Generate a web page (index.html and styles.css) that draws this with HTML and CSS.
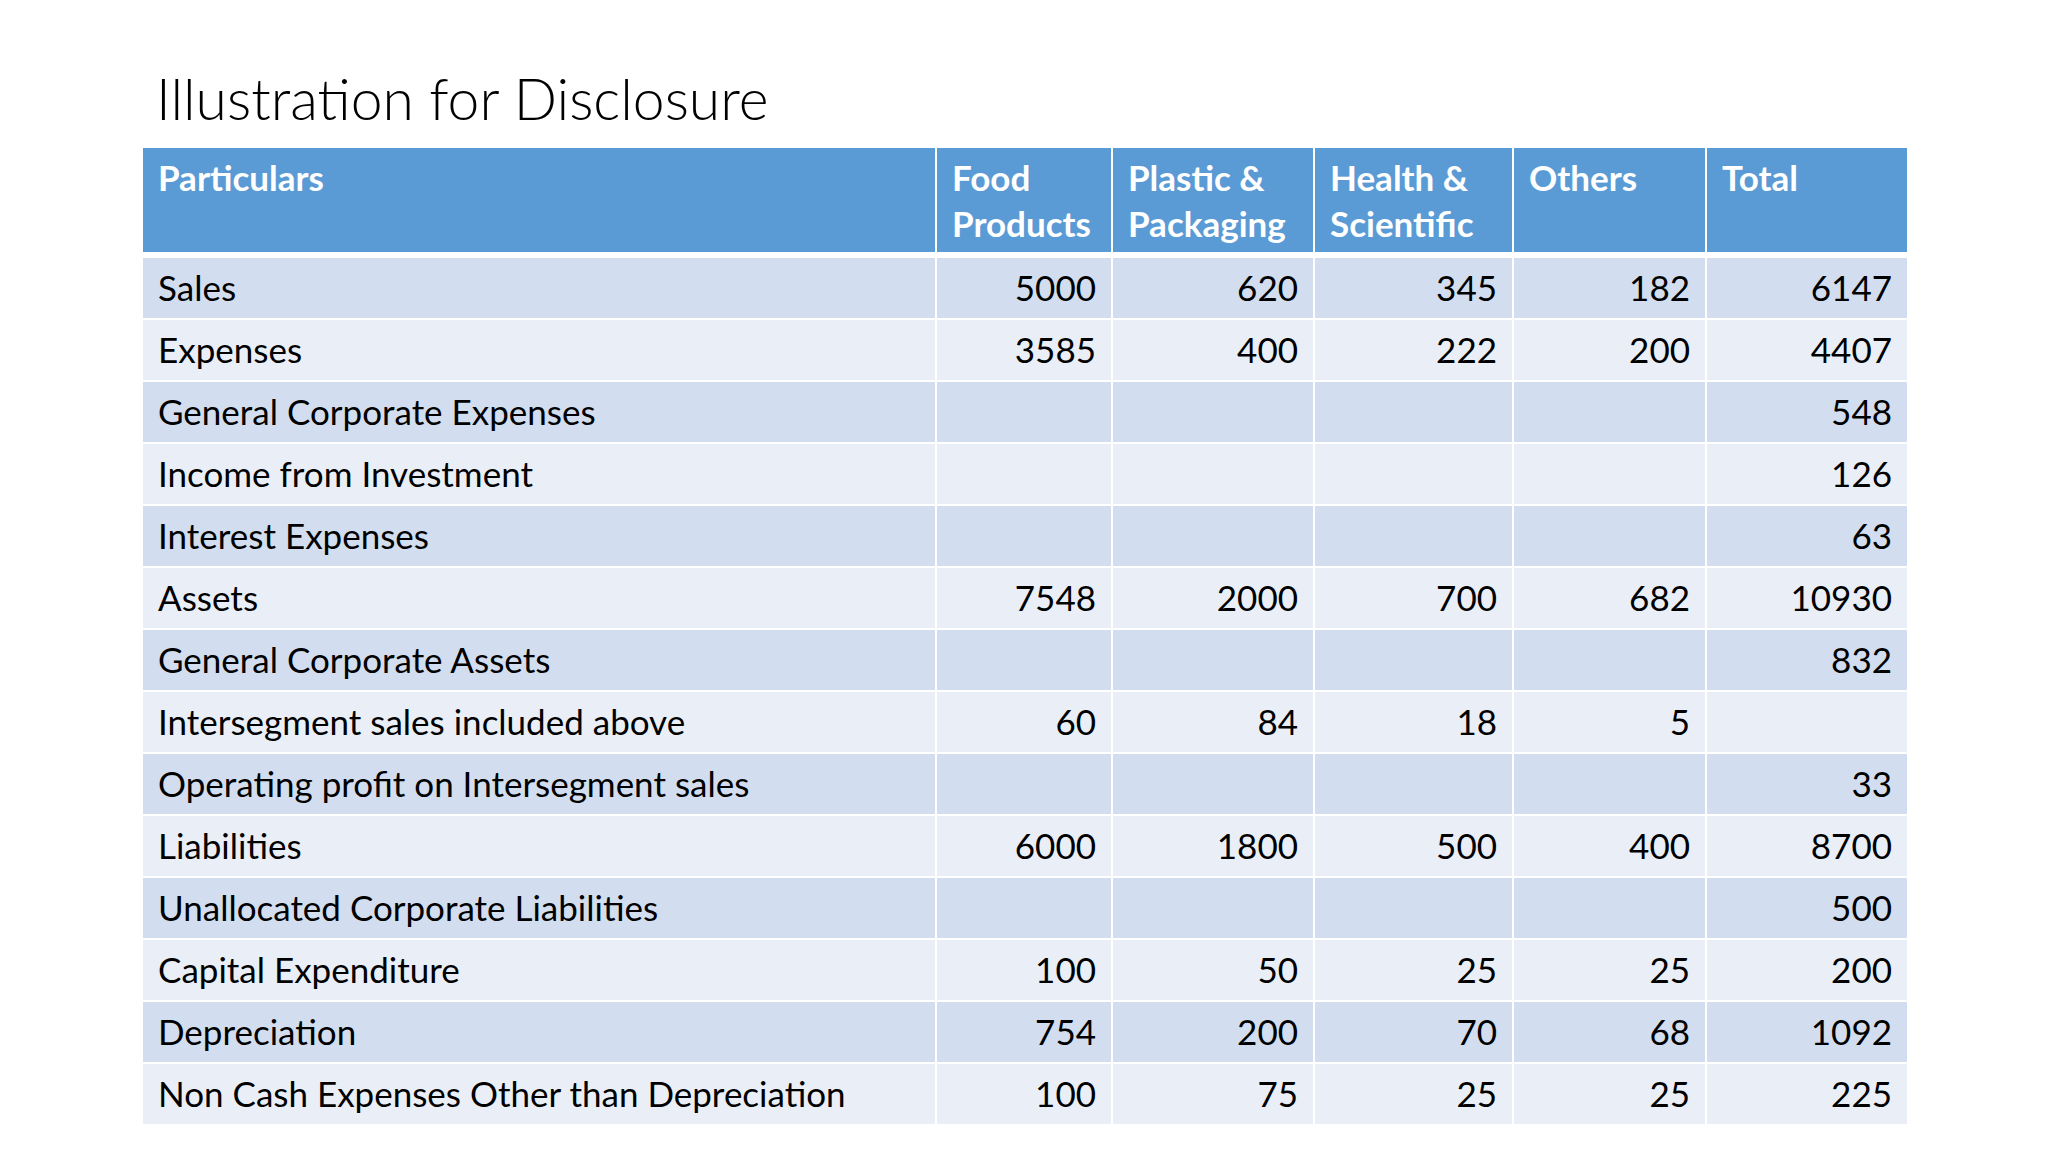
FILE: index.html
```html
<!DOCTYPE html>
<html lang="en">
<head>
<meta charset="utf-8">
<title>Illustration for Disclosure</title>
<link rel="stylesheet" href="styles.css">
</head>
<body>
<div class="slide">
  <h1 class="title">Illustration for Disclosure</h1>
  <table class="grid">
    <colgroup>
      <col class="c-part">
      <col class="c-food">
      <col class="c-plastic">
      <col class="c-health">
      <col class="c-others">
      <col class="c-total">
    </colgroup>
    <thead>
      <tr>
        <th>Particulars</th>
        <th>Food Products</th>
        <th>Plastic &amp; Packaging</th>
        <th>Health &amp; Scientific</th>
        <th>Others</th>
        <th>Total</th>
      </tr>
    </thead>
    <tbody>
      <tr><td>Sales</td><td>5000</td><td>620</td><td>345</td><td>182</td><td>6147</td></tr>
      <tr><td>Expenses</td><td>3585</td><td>400</td><td>222</td><td>200</td><td>4407</td></tr>
      <tr><td>General Corporate Expenses</td><td></td><td></td><td></td><td></td><td>548</td></tr>
      <tr><td>Income from Investment</td><td></td><td></td><td></td><td></td><td>126</td></tr>
      <tr><td>Interest Expenses</td><td></td><td></td><td></td><td></td><td>63</td></tr>
      <tr><td>Assets</td><td>7548</td><td>2000</td><td>700</td><td>682</td><td>10930</td></tr>
      <tr><td>General Corporate Assets</td><td></td><td></td><td></td><td></td><td>832</td></tr>
      <tr><td>Intersegment sales included above</td><td>60</td><td>84</td><td>18</td><td>5</td><td></td></tr>
      <tr><td>Operating profit on Intersegment sales</td><td></td><td></td><td></td><td></td><td>33</td></tr>
      <tr><td>Liabilities</td><td>6000</td><td>1800</td><td>500</td><td>400</td><td>8700</td></tr>
      <tr><td>Unallocated Corporate Liabilities</td><td></td><td></td><td></td><td></td><td>500</td></tr>
      <tr><td>Capital Expenditure</td><td>100</td><td>50</td><td>25</td><td>25</td><td>200</td></tr>
      <tr><td>Depreciation</td><td>754</td><td>200</td><td>70</td><td>68</td><td>1092</td></tr>
      <tr><td>Non Cash Expenses Other than Depreciation</td><td>100</td><td>75</td><td>25</td><td>25</td><td>225</td></tr>
    </tbody>
  </table>
</div>
</body>
</html>
```

FILE: styles.css
```css
html, body {
  margin: 0;
  padding: 0;
  background: #ffffff;
}

.slide {
  width: 2048px;
  height: 1152px;
  box-sizing: border-box;
  padding: 70px 0 0 141px;
  font-family: Lato, "Open Sans", "DejaVu Sans", sans-serif;
  color: #000000;
}

.title {
  margin: 0 0 0 15px;
  height: 76px;
  font-size: 57px;
  line-height: 57px;
  font-weight: 300;
  color: #000000;
}

.grid {
  border-collapse: collapse;
  table-layout: fixed;
  width: 1766px;
  font-size: 35px;
}

.c-part { width: 794px; }
.c-food { width: 176px; }
.c-plastic { width: 202px; }
.c-health { width: 199px; }
.c-others { width: 193px; }
.c-total { width: 202px; }

.grid th,
.grid td {
  border: 2px solid #ffffff;
  padding: 0 15px;
}

.grid th {
  background: #5b9bd5;
  color: #ffffff;
  font-weight: 700;
  text-align: left;
  vertical-align: top;
  height: 98px;
  padding-top: 6px;
  line-height: 46px;
  border-bottom-width: 6px;
}

.grid td {
  height: 57px;
  padding-bottom: 3px;
  line-height: 40px;
  text-align: right;
  vertical-align: middle;
  white-space: nowrap;
}

.grid td:first-child {
  text-align: left;
}

.grid tbody tr:nth-child(odd) td {
  background: #d2deef;
}

.grid tbody tr:nth-child(even) td {
  background: #eaeff7;
}
```
